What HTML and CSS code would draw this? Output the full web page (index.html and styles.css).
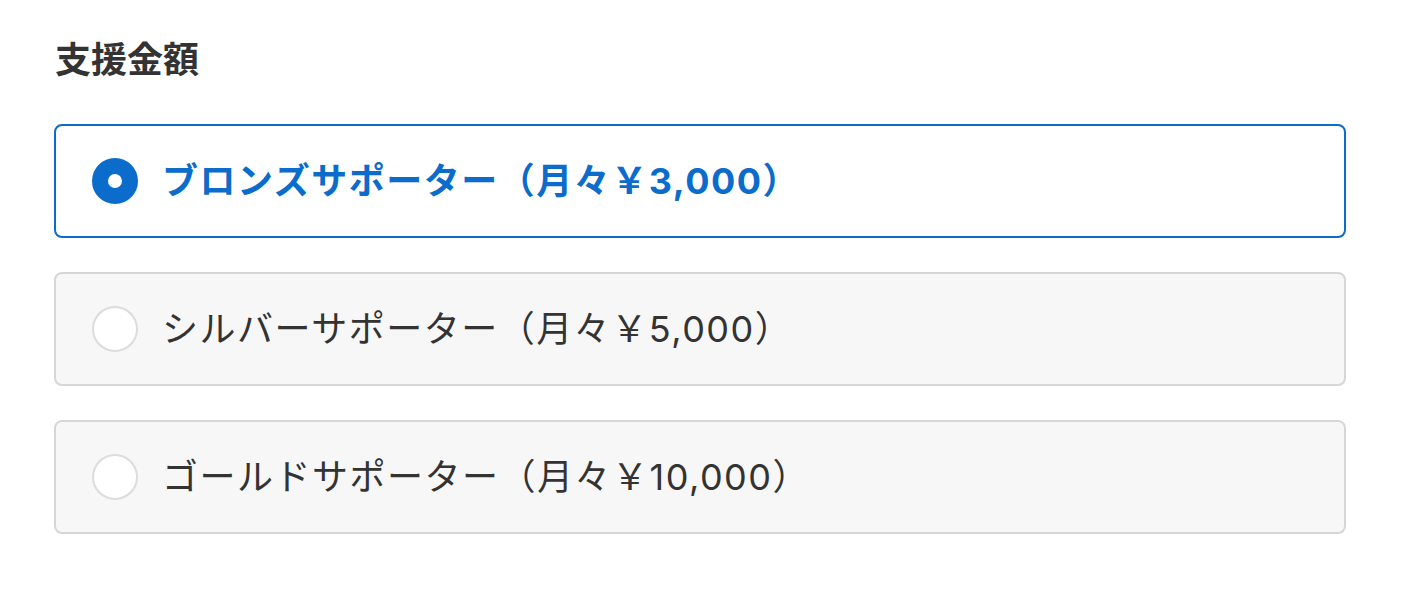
FILE: index.html
```html
<!DOCTYPE html>
<html lang="ja">
<head>
<meta charset="utf-8">
<link rel="stylesheet" href="styles.css">
</head>
<body>
<div class="form">
  <h2 class="label">支援金額</h2>
  <div class="options">
    <label class="option selected">
      <span class="radio"></span>
      <span class="text">ブロンズサポーター（月々￥3,000）</span>
    </label>
    <label class="option">
      <span class="radio"></span>
      <span class="text">シルバーサポーター（月々￥5,000）</span>
    </label>
    <label class="option">
      <span class="radio"></span>
      <span class="text">ゴールドサポーター（月々￥10,000）</span>
    </label>
  </div>
</div>
</body>
</html>
```
FILE: styles.css
```css
html, body {
  margin: 0;
  padding: 0;
  background: #fff;
}
body {
  font-family: "Inter", "Noto Sans CJK JP", sans-serif;
  color: #333;
}
.form {
  padding: 35px 72px 0 54px;
}
.label {
  margin: 0 0 0 1px;
  font-size: 36px;
  font-weight: 700;
  line-height: 50px;
  color: #333;
}
.options {
  margin-top: 39px;
  display: flex;
  flex-direction: column;
  gap: 34px;
}
.option {
  display: flex;
  align-items: center;
  gap: 24px;
  height: 114px;
  box-sizing: border-box;
  padding: 0 36px;
  border: 2px solid #d6d6d6;
  border-radius: 8px;
  background: #f7f7f7;
}
.option.selected {
  border-color: #0b6ccb;
  background: #fff;
}
.radio {
  width: 46px;
  height: 46px;
  box-sizing: border-box;
  border-radius: 50%;
  border: 2px solid #dcdcdc;
  background: #fff;
  flex: none;
}
.selected .radio {
  border: 16px solid #0b6ccb;
}
.text {
  font-size: 36px;
  line-height: 50px;
  letter-spacing: 1.5px;
  text-spacing-trim: space-all;
  color: #333;
}
.selected .text {
  color: #0b6ccb;
  font-weight: 700;
}
```
